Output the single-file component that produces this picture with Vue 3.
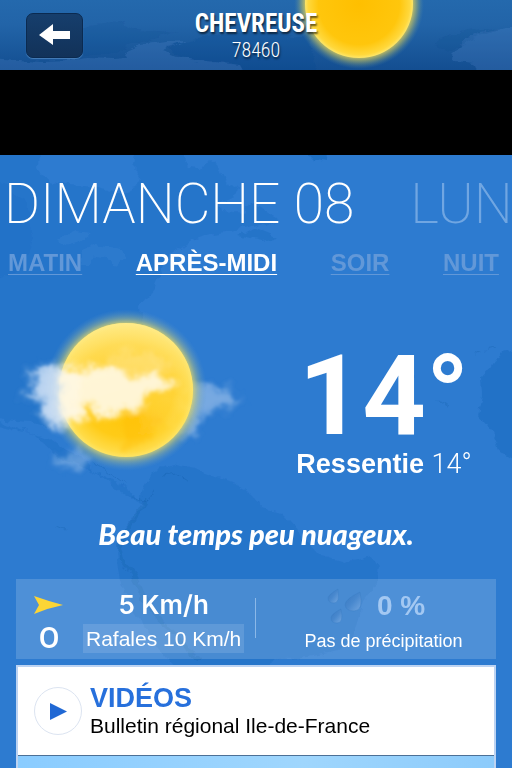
<script setup>
import { ref } from 'vue'

const periods = ['MATIN', 'APRÈS-MIDI', 'SOIR', 'NUIT']
const active = ref('APRÈS-MIDI')
</script>

<template>
  <div class="page">
    <header class="topbar">
      <svg class="topbar-art" viewBox="0 0 512 70" preserveAspectRatio="xMidYMin slice" aria-hidden="true">
        <defs>
          <radialGradient id="sunTop">
            <stop offset="0" stop-color="#ffbf00" />
            <stop offset="0.75" stop-color="#ffc60c" />
            <stop offset="0.94" stop-color="#ffd83c" />
            <stop offset="1" stop-color="#fde66a" />
          </radialGradient>
          <radialGradient id="glowTop">
            <stop offset="0.8" stop-color="#f4d94e" stop-opacity="0.9" />
            <stop offset="0.9" stop-color="#c9c862" stop-opacity="0.4" />
            <stop offset="1" stop-color="#5f93a0" stop-opacity="0" />
          </radialGradient>
          <filter id="coastTop" x="-5%" y="-20%" width="110%" height="140%">
            <feTurbulence type="fractalNoise" baseFrequency="0.05 0.16" numOctaves="3" seed="4" />
            <feDisplacementMap in="SourceGraphic" scale="9" xChannelSelector="R" yChannelSelector="G" />
            <feGaussianBlur stdDeviation="0.5" />
          </filter>
        </defs>
        <g filter="url(#coastTop)">
          <path fill="#5c8fd0" opacity="0.22" d="M-9 58 L20 60 L42 62 L70 61 L88 58 L112 59 L124 58 L128 50 L140 45 L166 41 L186 40 L168 47 L164 52 L176 57 L196 60 L218 62 L240 65 L248 80 L-9 80Z" />
          <path fill="#0a3f80" opacity="0.13" d="M62 40 L90 25 L118 21 L134 30 L178 32 L150 39 L130 44 L118 53 L92 54 L68 55 L44 51 L30 45Z" />
          <path fill="#0b468f" opacity="0.2" d="M166 46 L190 40 L214 34 L260 32 L310 38 L318 80 L248 80 L240 65 L200 61 L180 57Z" />
          <path fill="#5c8fd0" opacity="0.22" d="M520 26 L480 32 L464 38 L460 48 L450 54 L456 61 L474 63 L480 80 L520 80Z" />
          <path fill="#0a3f80" opacity="0.12" d="M438 39 L466 30 L506 28 L478 35 L462 45 L450 50 L436 46Z" />
        </g>
        <circle cx="359" cy="4" r="65" fill="url(#glowTop)" />
        <circle cx="359" cy="4" r="54" fill="url(#sunTop)" />
      </svg>
      <div class="side">
        <button class="back" type="button" aria-label="Retour">
          <svg viewBox="0 0 32 22" width="32" height="22"><path fill="#fff" d="M0 11 L14 0 V7 H31 V15 H14 V21Z" /></svg>
        </button>
      </div>
      <div class="place">
        <h1>CHEVREUSE</h1>
        <p>78460</p>
      </div>
      <div class="side"></div>
    </header>

    <div class="banner"></div>

    <main class="content">
      <svg class="map" viewBox="0 0 512 613" preserveAspectRatio="xMidYMin slice" aria-hidden="true">
        <defs>
          <filter id="coast" x="-5%" y="-5%" width="110%" height="110%">
            <feTurbulence type="fractalNoise" baseFrequency="0.09" numOctaves="3" seed="3" />
            <feDisplacementMap in="SourceGraphic" scale="9" xChannelSelector="R" yChannelSelector="G" />
            <feGaussianBlur stdDeviation="0.5" />
          </filter>
        </defs>
        <g fill="#1258ac" filter="url(#coast)">
          <path opacity="0.16" d="M-9 -9 H40 L39 15 L50 27 L70 30 L98 32 L118 38 L138 31 L141 18 L132 9 L136 -9 H181 L188 13 L200 14 L208 3 L217 11 L229 29 L239 32 L235 42 L220 47 L222 56 L244 58 L252 49 L277 63 L280 70 L262 67 L244 72 L231 76 L212 79 L184 90 L167 103 L160 120 L154 134 L140 150 L142 175 L110 185 L80 190 L62 210 L56 240 L58 260 L48 273 L31 267 L15 266 L-9 263Z" />
          <path opacity="0.1" d="M-9 20 L25 45 L33 81 L22 115 L-9 126Z" />
          <path opacity="0.3" d="M301 -9 H333 L326 6 L313 4Z" />
          <path opacity="0.2" d="M240 80 L255 72 L270 78 L277 82 L264 86Z" />
          <path opacity="0.16" d="M-9 262 L29 278 L50 283 L66 296 L85 304 L96 318 L112 325 L130 335 L138 345 L147 325 L157 315 L172 309 L195 314 L216 321 L236 329 L252 340 L260 351 L284 360 L298 377 L318 399 L345 407 L372 400 L380 414 L376 431 L363 447 L357 468 L350 486 L338 496 L308 502 L280 503 L260 515 L239 524 L213 536 L207 559 L180 540 L177 515 L155 488 L137 459 L120 428 L116 397 L126 374 L143 349 L133 344 L120 336 L95 318 L80 309 L58 302 L35 280 L-9 268Z" />
          <path opacity="0.24" d="M520 193 L501 198 L492 211 L481 223 L482 239 L478 259 L492 276 L501 296 L520 307Z" />
        </g>
        <g fill="#4b8fdc" opacity="0.22" filter="url(#coast)">
          <path d="M82 96 L96 90 L122 94 L126 103 L116 112 L110 103 L96 100 L88 112 L80 108Z" />
          <path d="M58 84 L76 76 L92 78 L80 86 L64 90Z" />
        </g>
        <g fill="none" stroke="#124e91" stroke-linecap="round" stroke-linejoin="round" filter="url(#coast)">
          <path stroke-width="4" opacity="0.14" d="M145 346 L132 367 L119 391 L122 406 L134 421 L143 442 L154 460 L177 481 L187 496 L199 504" />
          <path stroke-width="1" opacity="0.18" d="M92 306 L107 316 L125 329 M162 320 L177 318 L188 325 M475 199 L480 197 M485 196 L498 192 M436 244 L448 252 M58 372 L65 375 M133 342 L148 346 L153 335" />
        </g>
      </svg>

      <nav class="days" aria-label="Jours">
        <a class="day" href="#dimanche">DIMANCHE 08</a>
        <a class="day next" href="#lundi">LUNDI 09</a>
      </nav>

      <nav class="periods" aria-label="Moments de la journée">
        <a
          v-for="p in periods"
          :key="p"
          href="#moment"
          :class="{ on: p === active }"
          @click.prevent="active = p"
        >{{ p }}</a>
      </nav>

      <section class="now">
        <svg class="weather" viewBox="0 0 256 170" role="img" aria-label="Soleil et nuages">
          <defs>
            <radialGradient id="sun">
              <stop offset="0" stop-color="#ffc400" />
              <stop offset="0.7" stop-color="#ffcb17" />
              <stop offset="0.93" stop-color="#ffdb46" />
              <stop offset="1" stop-color="#fde464" />
            </radialGradient>
            <linearGradient id="shine" x1="0" y1="0" x2="0" y2="1">
              <stop offset="0" stop-color="#fff0a0" stop-opacity="0.65" />
              <stop offset="0.5" stop-color="#ffe47a" stop-opacity="0.25" />
              <stop offset="0.75" stop-color="#ffd83c" stop-opacity="0" />
            </linearGradient>
            <radialGradient id="glow">
              <stop offset="0.8" stop-color="#ecdc62" stop-opacity="0.95" />
              <stop offset="0.88" stop-color="#b5c184" stop-opacity="0.5" />
              <stop offset="1" stop-color="#5a96cc" stop-opacity="0" />
            </radialGradient>
            <linearGradient id="mist" x1="0" y1="0" x2="1" y2="0">
              <stop offset="0" stop-color="#b4d0f0" />
              <stop offset="1" stop-color="#eef4fb" />
            </linearGradient>
            <filter id="cloud" x="-10%" y="-20%" width="120%" height="140%">
              <feGaussianBlur in="SourceGraphic" stdDeviation="3" result="soft" />
              <feTurbulence type="fractalNoise" baseFrequency="0.07" numOctaves="3" seed="11" />
              <feDisplacementMap in="soft" scale="17" xChannelSelector="R" yChannelSelector="G" />
              <feGaussianBlur stdDeviation="0.8" />
            </filter>
          </defs>
          <g filter="url(#cloud)" fill="#a9c8ec">
            <path opacity="0.6" d="M188 78 L204 74 L215 78 L224 82 L230 71 L231 84 L239 89 L232 98 L221 98 L208 99 L201 108 L196 126 L182 128Z" />
            <path opacity="0.45" d="M50 153 L64 144 L78 141 L92 149 L80 158Z" />
          </g>
          <circle cx="126" cy="80" r="81" fill="url(#glow)" />
          <circle cx="126" cy="80" r="67" fill="url(#sun)" />
          <circle cx="126" cy="80" r="67" fill="url(#shine)" />
          <g filter="url(#cloud)">
            <path fill="#ffe8a0" opacity="0.4" d="M105 47 L126 41 L154 45 L174 58 L164 66 L130 69Z" />
            <path fill="#fff0a8" opacity="0.14" d="M135 98 L155 84 L181 85 L188 98 L169 116 L143 120Z" />
            <path fill="#ffb900" opacity="0.35" d="M122 108 L140 100 L160 106 L150 132 L124 140Z" />
            <path fill="url(#mist)" opacity="0.9" d="M26 66 L34 57 L50 55 L70 57 L80 60 L78 84 L74 108 L66 112 L54 118 L46 110 L38 101 L44 91 L34 89 L20 90 L34 80 L36 72Z" />
            <path fill="#fff8df" opacity="0.95" d="M60 59 L78 57 L94 61 L108 54 L120 58 L129 69 L139 67 L154 60 L166 68 L178 72 L170 79 L156 78 L145 86 L141 98 L118 103 L105 108 L96 107 L94 96 L86 92 L85 111 L62 110Z" />
          </g>
        </svg>
        <div class="reading">
          <div class="temp">14°</div>
          <div class="felt"><b>Ressentie</b> <span>14°</span></div>
        </div>
      </section>

      <p class="summary">Beau temps peu nuageux.</p>

      <section class="details">
        <div class="wind">
          <div class="direction">
            <svg viewBox="0 0 30 18" width="30" height="18" aria-hidden="true"><path fill="#fcd535" d="M0 0 Q14 5 29 9 Q14 12 0 18 L5 9Z" /></svg>
            <span class="compass">O</span>
          </div>
          <div class="speeds">
            <span class="speed">5 Km/h</span>
            <span class="gusts">Rafales 10 Km/h</span>
          </div>
        </div>
        <div class="rain">
          <div class="chance">
            <svg viewBox="0 0 36 38" width="36" height="38" aria-hidden="true">
              <defs>
                <linearGradient id="drop" x1="0" y1="0" x2="1" y2="1">
                  <stop offset="0" stop-color="#3878c0" />
                  <stop offset="0.5" stop-color="#4888ce" />
                  <stop offset="1" stop-color="#72a6e0" />
                </linearGradient>
              </defs>
              <g fill="url(#drop)" stroke="#3a7cc4" stroke-opacity="0.4">
                <path d="M11 2 Q13 16 7 16 Q1 16 1 11 Q1 8 11 2Z" />
                <path d="M33 5 Q37 24 27 24 Q19 24 18 18 Q18 12 33 5Z" />
                <path d="M14 22 Q17 36 10 36 Q4 36 4 31 Q4 27 14 22Z" />
              </g>
            </svg>
            <span>0 %</span>
          </div>
          <div class="rain-text">Pas de précipitation</div>
        </div>
      </section>

      <a class="videos" href="#videos">
        <span class="videos-head">
          <span class="play">
            <svg viewBox="0 0 17 17" width="17" height="17" aria-hidden="true"><path fill="#2068d4" d="M0 0 L17 8.5 L0 17Z" /></svg>
          </span>
          <span class="videos-text">
            <strong>VIDÉOS</strong>
            <span>Bulletin régional Ile-de-France</span>
          </span>
        </span>
        <span class="thumb"></span>
      </a>
    </main>
  </div>
</template>

<style>
body {
  margin: 0;
  background: #2d7bd0;
}
</style>

<style scoped>
.page {
  height: 100vh;
  overflow: hidden;
  display: flex;
  flex-direction: column;
  font-family: "Liberation Sans", Arial, sans-serif;
  color: #fff;
}
.topbar {
  position: relative;
  flex: none;
  box-sizing: border-box;
  height: 70px;
  display: flex;
  align-items: center;
  padding: 0 26px;
  background: linear-gradient(#2469ad, #2264a8 35%, #134e91);
}
.topbar-art,
.map {
  position: absolute;
  inset: 0;
  width: 100%;
  height: 100%;
}
.side {
  position: relative;
  flex: 1;
}
.back {
  display: flex;
  align-items: center;
  justify-content: center;
  width: 57px;
  height: 45px;
  padding: 0;
  border: 1px solid #0b2a50;
  border-radius: 7px;
  background: linear-gradient(#163e6c, #123259);
  box-shadow: 0 1px 1px rgba(120, 170, 220, 0.5);
}
.place {
  position: relative;
  text-align: center;
  font-family: "Roboto Condensed", "Liberation Sans Narrow", Arial, sans-serif;
  text-shadow: 1px 2px 2px rgba(0, 0, 0, 0.6);
}
.place h1 {
  margin: 0;
  padding-top: 2px;
  font-size: 25px;
  line-height: 28px;
}
.place p {
  margin: 0;
  font-size: 20px;
  line-height: 24px;
  font-weight: 300;
}
.banner {
  flex: none;
  height: 85px;
  background: #000;
}
.content {
  position: relative;
  flex: 1;
  min-height: 0;
  display: flex;
  flex-direction: column;
  background: #2d7bd0;
}
.days {
  position: relative;
  flex: none;
  display: flex;
  gap: 56px;
  overflow: hidden;
  padding: 16px 0 0 4px;
  white-space: nowrap;
}
.day {
  font-family: Roboto, "Liberation Sans", sans-serif;
  font-weight: 200;
  font-size: 55px;
  line-height: 66px;
  color: #fff;
  text-decoration: none;
}
.next {
  color: #70a6e2;
}
.periods {
  position: relative;
  flex: none;
  display: flex;
  justify-content: space-between;
  padding: 12px 13px 0 8px;
}
.periods a {
  font-size: 24px;
  line-height: 28px;
  font-weight: 700;
  color: #6298d8;
  text-underline-offset: 3px;
  text-decoration-thickness: 1px;
}
.periods a.on {
  color: #fff;
}
.now {
  position: relative;
  flex: none;
  display: grid;
  grid-template-columns: 1fr 1fr;
  align-items: start;
  padding-top: 33px;
}
.weather {
  width: 100%;
}
.reading {
  text-align: center;
  padding-top: 33px;
}
.temp {
  font-family: Roboto, "Liberation Sans", sans-serif;
  font-size: 111px;
  line-height: 106px;
  font-weight: 700;
}
.felt {
  font-size: 27px;
  line-height: 30px;
}
.felt span {
  font-family: Roboto, "Liberation Sans", sans-serif;
  font-weight: 300;
}
.summary {
  position: relative;
  flex: none;
  margin: 0;
  padding-top: 36px;
  text-align: center;
  font-family: Lato, sans-serif;
  font-weight: 900;
  font-style: italic;
  font-size: 29px;
  line-height: 36px;
}
.details {
  position: relative;
  flex: none;
  box-sizing: border-box;
  height: 80px;
  margin: 27px 16px 0;
  display: grid;
  grid-template-columns: 1fr 1fr;
  background: rgba(255, 255, 255, 0.16);
}
.wind {
  display: flex;
  padding: 8px 0 0 18px;
}
.wind::after {
  content: "";
  width: 1px;
  height: 40px;
  margin: 11px 0 0 auto;
  background: #8bb8e8;
}
.direction {
  display: flex;
  flex-direction: column;
  align-items: center;
  padding: 9px 19px 0 0;
}
.compass {
  font-family: Roboto, sans-serif;
  font-weight: 500;
  font-size: 30px;
  line-height: 32px;
  padding-top: 8px;
}
.speeds {
  display: flex;
  flex-direction: column;
  align-items: center;
  gap: 2px;
  white-space: nowrap;
}
.speed {
  font-family: Inter, sans-serif;
  font-weight: 600;
  font-size: 26px;
  line-height: 35px;
}
.gusts {
  padding: 0 3px;
  font-size: 21px;
  line-height: 29px;
  background: rgba(255, 255, 255, 0.12);
}
.rain {
  display: flex;
  flex-direction: column;
  align-items: center;
  padding-top: 8px;
}
.chance {
  display: flex;
  align-items: center;
  gap: 14px;
  font-size: 28px;
  line-height: 38px;
  font-weight: 700;
  color: #a3c8f2;
}
.rain-text {
  padding-left: 15px;
  font-size: 18px;
  line-height: 32px;
}
.videos {
  position: relative;
  flex: 1;
  min-height: 0;
  display: flex;
  flex-direction: column;
  margin: 6px 16px 0;
  border: 2px solid #bcd3f2;
  border-bottom: 0;
  background: #fff;
  color: #000;
  text-decoration: none;
}
.videos-head {
  display: flex;
  align-items: center;
  gap: 8px;
  flex: none;
  height: 88px;
  padding-left: 16px;
}
.play {
  box-sizing: border-box;
  width: 48px;
  height: 48px;
  border: 1px solid #dce4f1;
  border-radius: 50%;
  display: flex;
  align-items: center;
  justify-content: center;
}
.videos-text {
  display: flex;
  flex-direction: column;
  font-size: 21px;
  line-height: 26px;
}
.videos-text strong {
  font-size: 27px;
  line-height: 30px;
  color: #2770dc;
}
.thumb {
  flex: 1;
  border-top: 1px solid #4c7096;
  background: linear-gradient(90deg, #8accff, #9fd6fd 60%, #8ccbfb);
}
</style>
